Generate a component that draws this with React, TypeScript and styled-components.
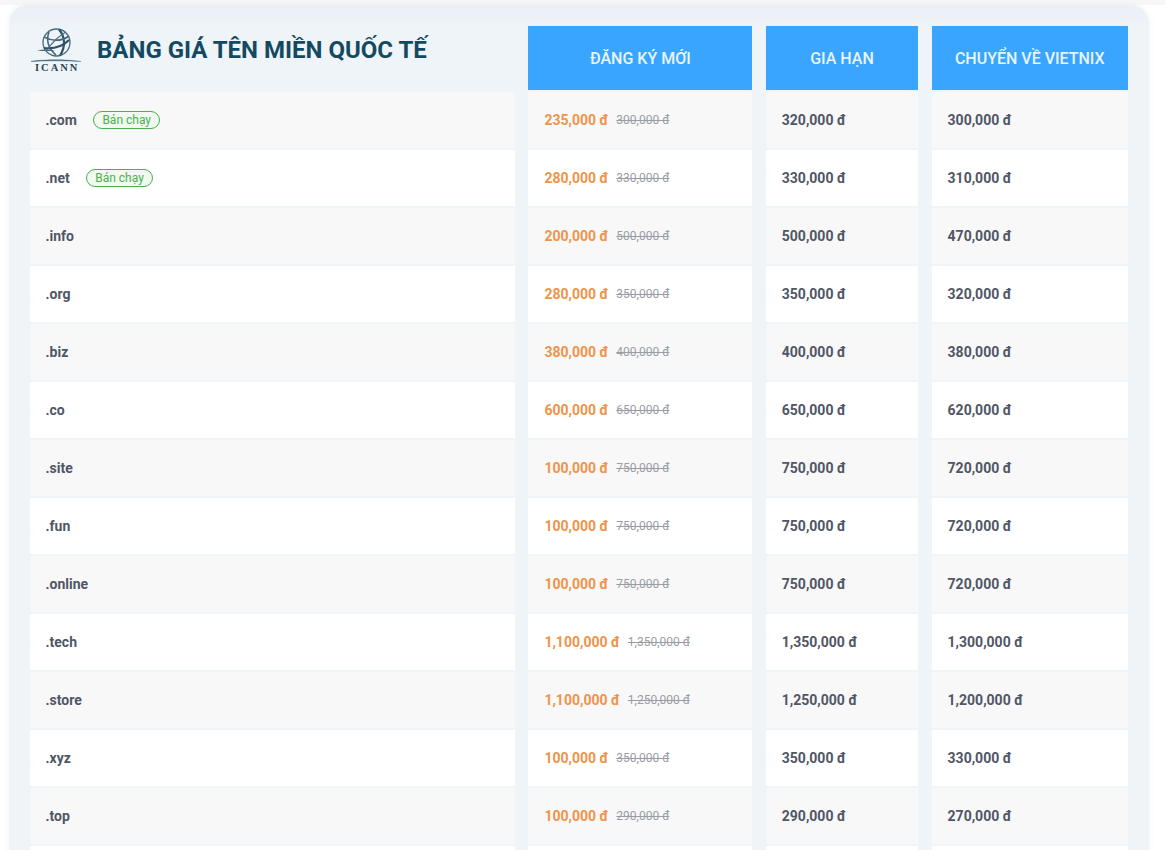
import styled, { createGlobalStyle } from 'styled-components';

interface DomainRow {
  tld: string;
  hot?: boolean;
  price: string;
  oldPrice: string;
  renew: string;
  transfer: string;
}

const rows: DomainRow[] = [
  { tld: '.com', hot: true, price: '235,000 đ', oldPrice: '300,000 đ', renew: '320,000 đ', transfer: '300,000 đ' },
  { tld: '.net', hot: true, price: '280,000 đ', oldPrice: '330,000 đ', renew: '330,000 đ', transfer: '310,000 đ' },
  { tld: '.info', price: '200,000 đ', oldPrice: '500,000 đ', renew: '500,000 đ', transfer: '470,000 đ' },
  { tld: '.org', price: '280,000 đ', oldPrice: '350,000 đ', renew: '350,000 đ', transfer: '320,000 đ' },
  { tld: '.biz', price: '380,000 đ', oldPrice: '400,000 đ', renew: '400,000 đ', transfer: '380,000 đ' },
  { tld: '.co', price: '600,000 đ', oldPrice: '650,000 đ', renew: '650,000 đ', transfer: '620,000 đ' },
  { tld: '.site', price: '100,000 đ', oldPrice: '750,000 đ', renew: '750,000 đ', transfer: '720,000 đ' },
  { tld: '.fun', price: '100,000 đ', oldPrice: '750,000 đ', renew: '750,000 đ', transfer: '720,000 đ' },
  { tld: '.online', price: '100,000 đ', oldPrice: '750,000 đ', renew: '750,000 đ', transfer: '720,000 đ' },
  { tld: '.tech', price: '1,100,000 đ', oldPrice: '1,350,000 đ', renew: '1,350,000 đ', transfer: '1,300,000 đ' },
  { tld: '.store', price: '1,100,000 đ', oldPrice: '1,250,000 đ', renew: '1,250,000 đ', transfer: '1,200,000 đ' },
  { tld: '.xyz', price: '100,000 đ', oldPrice: '350,000 đ', renew: '350,000 đ', transfer: '330,000 đ' },
  { tld: '.top', price: '100,000 đ', oldPrice: '290,000 đ', renew: '290,000 đ', transfer: '270,000 đ' },
];

const GlobalStyle = createGlobalStyle`
  html, body {
    margin: 0;
    height: 850px;
    overflow: hidden;
    background: #fff;
    font-family: Roboto, "Liberation Sans", sans-serif;
  }
`;

const Page = styled.div`
  padding: 5px 16px 0 9px;
  background: linear-gradient(#f7f7f7 0, #f7f7f7 5px, #fff 5px);
`;

const Card = styled.div`
  background: linear-gradient(#ebeff6 0, #eff4f9 24px);
  border-radius: 18px 18px 0 0;
  padding: 21px 21px 0 21px;
  box-shadow: 0 0 6px rgba(120, 140, 170, 0.1);
`;

const PriceGrid = styled.div`
  display: grid;
  grid-template-columns: 485px 224px 152.4px 196.4px;
  column-gap: 13.4px;
  row-gap: 2px;
  grid-template-rows: 64px;
  grid-auto-rows: 56px;
`;

const TitleCell = styled.div`
  display: flex;
  align-items: flex-start;
  gap: 12px;
  padding: 2px 0 0 1px;
`;

const Logo = styled.div`
  position: relative;
  width: 54px;
  height: 46px;
  flex: none;
`;

const LogoText = styled.span`
  position: absolute;
  left: 4px;
  top: 35px;
  font-family: "Liberation Serif", serif;
  font-size: 10.5px;
  line-height: 10px;
  font-weight: 700;
  letter-spacing: 2px;
  color: #2b4552;
`;

const Title = styled.h1`
  margin: 7px 0 0;
  font-size: 24px;
  line-height: 30px;
  font-weight: 700;
  color: #134a62;
  white-space: nowrap;
`;

const HeadCell = styled.div`
  display: flex;
  align-items: center;
  justify-content: center;
  background: #39a5ff;
  color: #e8f5ff;
  font-size: 16px;
  font-weight: 500;
`;

const Cell = styled.div<{ $shaded: boolean }>`
  display: flex;
  align-items: center;
  padding: 0 0 1px 16px;
  box-sizing: border-box;
  background: ${({ $shaded }) => ($shaded ? '#f8f8f9' : '#fff')};
  color: #505665;
  font-size: 14px;
  font-weight: 700;
  white-space: nowrap;
`;

const FirstCell = styled(Cell)`
  padding-left: 15.5px;
`;

const Badge = styled.span`
  margin-left: 16.5px;
  padding: 0 8px;
  height: 18px;
  line-height: 16px;
  box-sizing: border-box;
  border: 1px solid #4caf50;
  border-radius: 9px;
  background: #f1f9f1;
  color: #4caf50;
  font-size: 12px;
  font-weight: 400;
`;

const SalePrice = styled.span`
  color: #f0934a;
`;

const OldPrice = styled.s`
  margin-left: 8px;
  color: #9a9da5;
  font-size: 12px;
  font-weight: 400;
`;

function IcannLogo() {
  return (
    <Logo>
      <svg width="54" height="46" viewBox="0 0 54 46" fill="none">
        <circle cx="25.5" cy="14.5" r="13.5" stroke="#47697a" strokeWidth="1.3" />
        <path d="M18 4c-3 8-1 16 7 23" stroke="#47697a" strokeWidth="1.6" />
        <path d="M28 1.5c6 7 7 17 1 26" stroke="#2f5264" strokeWidth="2.2" />
        <path d="M13 9c7 4 17 5 25-1" stroke="#47697a" strokeWidth="1.6" />
        <path d="M13 20c9 1 18-1 25-8" stroke="#2f5264" strokeWidth="2.2" />
        <path d="M15 23c6-8 12-15 20-19" stroke="#47697a" strokeWidth="1.2" />
        <path d="M6 22.5c6-1.5 13-1.5 18 0-6 .8-12 .8-18 0Z" fill="#47697a" />
        <path d="M-1 33.5c16-2.2 35-2.2 51 0-16-1-35-1-51 0Z" fill="#3b6173" stroke="#3b6173" strokeWidth="0.4" />
      </svg>
      <LogoText>ICANN</LogoText>
    </Logo>
  );
}

export default function App() {
  return (
    <>
      <GlobalStyle />
      <Page>
        <Card>
          <PriceGrid>
            <TitleCell>
              <IcannLogo />
              <Title>BẢNG GIÁ TÊN MIỀN QUỐC TẾ</Title>
            </TitleCell>
            <HeadCell>ĐĂNG KÝ MỚI</HeadCell>
            <HeadCell>GIA HẠN</HeadCell>
            <HeadCell>CHUYỂN VỀ VIETNIX</HeadCell>
            {rows.map((row, i) => {
              const shaded = i % 2 === 0;
              return [
                <FirstCell key={row.tld + 'a'} $shaded={shaded}>
                  {row.tld}
                  {row.hot && <Badge>Bán chạy</Badge>}
                </FirstCell>,
                <Cell key={row.tld + 'b'} $shaded={shaded}>
                  <SalePrice>{row.price}</SalePrice>
                  <OldPrice>{row.oldPrice}</OldPrice>
                </Cell>,
                <Cell key={row.tld + 'c'} $shaded={shaded}>{row.renew}</Cell>,
                <Cell key={row.tld + 'd'} $shaded={shaded}>{row.transfer}</Cell>,
              ];
            })}
            <FirstCell $shaded={false} />
            <Cell $shaded={false} />
            <Cell $shaded={false} />
            <Cell $shaded={false} />
          </PriceGrid>
        </Card>
      </Page>
    </>
  );
}
